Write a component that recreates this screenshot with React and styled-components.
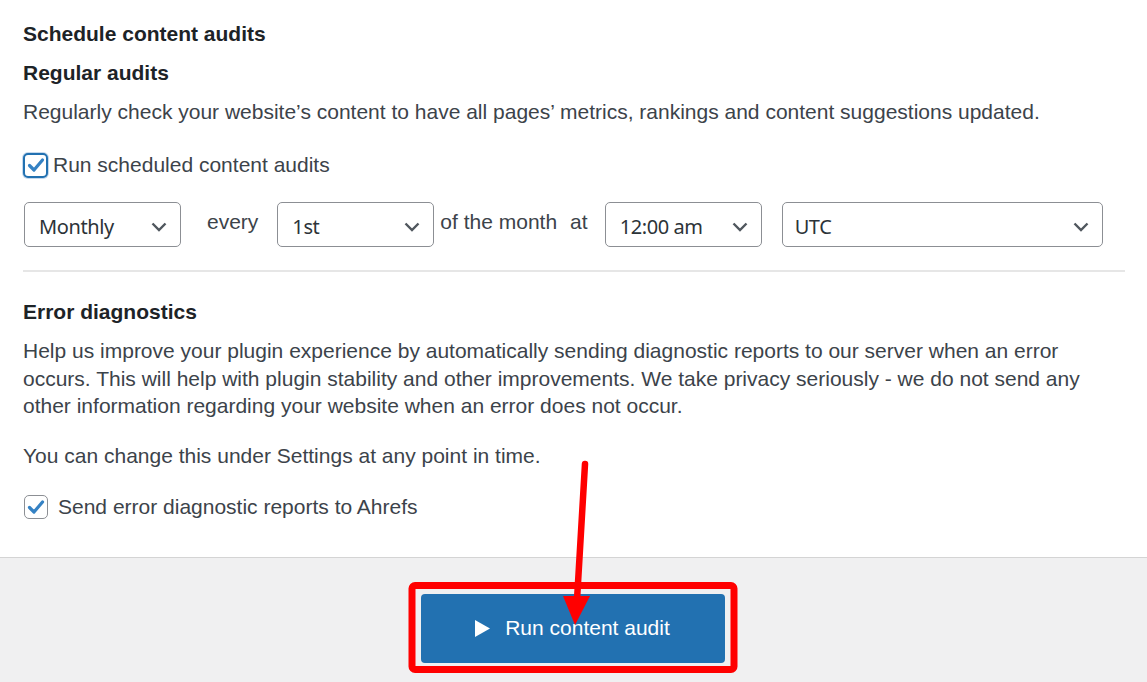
import React from 'react'
import styled, { createGlobalStyle } from 'styled-components'

const GlobalStyle = createGlobalStyle`
  html, body {
    margin: 0;
    padding: 0;
    background: #ffffff;
  }
  body {
    font-family: "Liberation Sans", Arial, sans-serif;
    color: #3c434a;
  }
`;

const Page = styled.div`
  position: relative;
  width: 1147px;
  height: 682px;
  overflow: hidden;
  display: flex;
  flex-direction: column;
`;

const Content = styled.div`
  padding: 20px 22px 36px 23px;
`;

const Heading = styled.h2`
  margin: ${p => p.$mt || 0}px 0 0;
  font-size: 21px;
  line-height: 27px;
  font-weight: 700;
  color: #1d2327;
`;

const Text = styled.p`
  margin: ${p => p.$mt || 0}px 0 0;
  font-size: 21px;
  line-height: 27.5px;
  color: #3c434a;
`;

const CheckRow = styled.label`
  display: flex;
  align-items: center;
  margin-top: ${p => p.$mt || 0}px;
  height: 27px;
  font-size: 21px;
  color: #3c434a;
`;

const Box = styled.span`
  box-sizing: border-box;
  width: ${p => (p.$focused ? 25 : 24)}px;
  height: ${p => (p.$focused ? 25 : 24)}px;
  margin-left: ${p => (p.$focused ? 0 : 1)}px;
  margin-right: ${p => (p.$focused ? 5 : 10)}px;
  border: ${p => (p.$focused ? '2px solid #2271b1' : '1px solid #8c8f94')};
  border-radius: 5px;
  background: #fff;
  display: flex;
  align-items: center;
  justify-content: center;
  box-shadow: ${p => (p.$focused ? '0 0 0 1px #c5d9ed' : 'none')};
`;

const Row = styled.div`
  display: flex;
  align-items: center;
  margin-top: 23.5px;
  height: 45px;
  padding-left: 1px;
`;

const Select = styled.div`
  box-sizing: border-box;
  width: ${p => p.$w}px;
  height: 45px;
  margin-right: ${p => p.$mr || 0}px;
  border: 1px solid #8c8f94;
  border-radius: 5px;
  display: flex;
  align-items: center;
  justify-content: space-between;
  padding: 4px 13px 0 ${p => p.$pl || 14}px;
  font-family: "Noto Sans", "Open Sans", sans-serif;
  font-size: 20px;
  letter-spacing: -0.4px;
  color: #2c3338;
  background: #fff;
`;

const Word = styled.span`
  font-size: 21px;
  color: #3c434a;
  margin: -5px ${p => p.$mr || 0}px 0 ${p => p.$ml || 0}px;
`;

const Rule = styled.hr`
  border: 0;
  border-top: 2px solid #e6e6e6;
  margin: 23px 0 0;
`;

const Footer = styled.div`
  flex: 1;
  border-top: 1px solid #d4d4d4;
  background: #f0f0f1;
  display: flex;
  justify-content: center;
  padding: 36px 2px 0 0;
`;

const Button = styled.button`
  width: 304px;
  height: 69px;
  border: 0;
  border-radius: 4px;
  background: #2271b1;
  color: #fff;
  font-family: "Liberation Sans", Arial, sans-serif;
  font-size: 21px;
  display: flex;
  align-items: center;
  justify-content: center;
  gap: 15px;
  padding: 0;
`;

const Overlay = styled.svg`
  position: absolute;
  left: 0;
  top: 0;
  pointer-events: none;
`;

function Check() {
  return (
    <svg width="18" height="16" viewBox="0 0 18 16">
      <path d="M2.5 8.5 L7 13 L15.5 3" fill="none" stroke="#3582c4" strokeWidth="3.2" strokeLinecap="round" strokeLinejoin="round" />
    </svg>
  );
}

function Chevron() {
  return (
    <svg width="16" height="10" viewBox="0 0 16 10">
      <path d="M1.5 1.5 L8 8 L14.5 1.5" fill="none" stroke="#50575e" strokeWidth="2.4" />
    </svg>
  );
}

function Dropdown({ value, w, pl, mr }) {
  return (
    <Select $w={w} $pl={pl} $mr={mr}>
      <span>{value}</span>
      <Chevron />
    </Select>
  );
}

export default function App() {
  return (
    <>
      <GlobalStyle />
      <Page>
        <Content>
          <Heading>Schedule content audits</Heading>
          <Heading $mt={12}>Regular audits</Heading>
          <Text $mt={12}>
            Regularly check your website’s content to have all pages’ metrics, rankings and content suggestions updated.
          </Text>
          <CheckRow $mt={26}>
            <Box $focused><Check /></Box>
            Run scheduled content audits
          </CheckRow>
          <Row>
            <Dropdown value="Monthly" w={157} />
            <Word $ml={26} $mr={19}>every</Word>
            <Dropdown value="1st" w={157} />
            <Word $ml={6} $mr={13}>of the month</Word>
            <Word $mr={17}>at</Word>
            <Dropdown value="12:00 am" w={157} mr={20} />
            <Dropdown value="UTC" w={321} pl={12} />
          </Row>
          <Rule />
          <Heading $mt={26}>Error diagnostics</Heading>
          <Text $mt={12}>
            Help us improve your plugin experience by automatically sending diagnostic reports to our server when an error
            occurs. This will help with plugin stability and other improvements. We take privacy seriously - we do not send any
            other information regarding your website when an error does not occur.
          </Text>
          <Text $mt={22.5}>You can change this under Settings at any point in time.</Text>
          <CheckRow $mt={24}>
            <Box><Check /></Box>
            Send error diagnostic reports to Ahrefs
          </CheckRow>
        </Content>
        <Footer>
          <Button>
            <svg width="15" height="17" viewBox="0 0 15 17">
              <path d="M0 0 L15 8.5 L0 17 Z" fill="#fff" />
            </svg>
            Run content audit
          </Button>
        </Footer>
        <Overlay width="1147" height="682" viewBox="0 0 1147 682">
          <rect x="412" y="585.5" width="322" height="84" rx="3" fill="none" stroke="#ff0000" strokeWidth="7" />
          <path d="M585 464 L577 600" stroke="#ff0000" strokeWidth="6.5" strokeLinecap="round" />
          <path d="M563 596 L590 596 L575 625 Z" fill="#ff0000" />
        </Overlay>
      </Page>
    </>
  );
}
